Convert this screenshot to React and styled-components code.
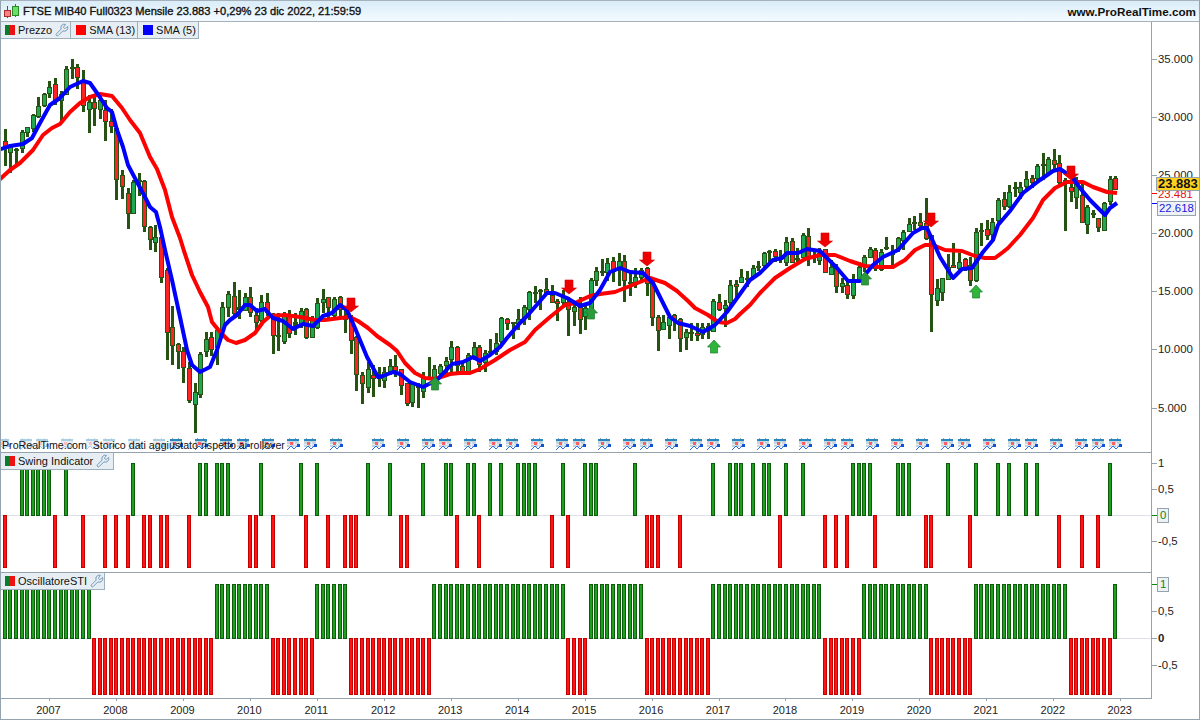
import React from 'react'
import styled, { createGlobalStyle } from 'styled-components'
import { Wrench } from 'lucide-react'

// bar x position in page pixels, one bar a month
const barX = i => 4.8 + 5.58 * i

// candles as read off the chart: [wick top, body top, body bottom, wick bottom, colour]
// y values are in 3x units from the given base line
const rows = (base, list) => list.map(r => [base + r[0] / 3, base + r[1] / 3, base + r[2] / 3, base + r[3] / 3, r[4]])

const candles = [
  ...rows(50, [
    [238, 274, 290, 350, 'r'], [285, 285, 305, 370, 'g'], [295, 298, 304, 345, 'd'], [240, 245, 293, 308, 'g'],
    [232, 232, 248, 262, 'g'], [192, 195, 235, 245, 'g'], [140, 168, 197, 203, 'g'], [128, 132, 165, 170, 'g'],
    [93, 112, 130, 145, 'g'], [85, 103, 150, 165, 'r'], [123, 133, 150, 212, 'g'], [48, 57, 132, 135, 'g'],
    [27, 50, 55, 87, 'd'], [42, 52, 82, 117, 'r'], [60, 95, 165, 185, 'r'], [135, 157, 178, 248, 'g'],
    [135, 157, 175, 228, 'r'], [135, 150, 178, 207, 'g'], [150, 180, 213, 272, 'r'], [178, 212, 228, 250, 'r'],
    [235, 235, 388, 450, 'r'], [360, 375, 408, 447, 'r'], [415, 428, 487, 538, 'r'], [390, 397, 490, 490, 'g'],
    [370, 390, 395, 440, 'd'], [390, 393, 527, 545, 'r'], [528, 532, 568, 600, 'r'], [525, 560, 575, 605, 'g'],
  ]),
  ...rows(250, [
    [-45, -39, 82, 100, 'r'], [55, 60, 245, 332, 'r'], [168, 230, 283, 345, 'r'], [280, 283, 305, 357, 'r'],
    [290, 303, 352, 398, 'r'], [335, 355, 450, 458, 'r'], [400, 425, 460, 550, 'g'], [305, 313, 432, 443, 'g'],
    [245, 268, 305, 320, 'g'], [245, 260, 295, 317, 'r'], [230, 240, 290, 345, 'g'], [155, 172, 242, 250, 'g'],
    [123, 133, 172, 200, 'g'], [97, 137, 188, 205, 'r'], [120, 170, 178, 208, 'd'], [130, 140, 180, 185, 'g'],
    [112, 140, 185, 203, 'r'], [175, 195, 217, 240, 'r'], [135, 157, 210, 215, 'g'], [130, 155, 185, 200, 'r'],
    [190, 205, 257, 314, 'r'], [190, 254, 260, 305, 'd'], [187, 195, 272, 282, 'g'], [180, 195, 248, 263, 'r'],
    [190, 215, 232, 255, 'd'], [175, 183, 225, 235, 'g'], [175, 178, 263, 267, 'r'], [197, 210, 260, 263, 'g'],
    [143, 160, 232, 235, 'g'], [117, 148, 157, 188, 'g'], [140, 142, 172, 205, 'r'], [140, 148, 195, 205, 'g'],
    [138, 142, 178, 200, 'r'], [178, 205, 211, 250, 'd'], [195, 205, 272, 312, 'r'], [258, 262, 372, 422, 'r'],
    [365, 375, 400, 460, 'r'], [335, 358, 412, 428, 'g'], [345, 375, 385, 442, 'r'], [352, 380, 386, 413, 'd'],
    [352, 365, 390, 415, 'g'], [328, 347, 362, 375, 'g'], [315, 347, 360, 380, 'r'], [358, 358, 405, 435, 'r'],
    [400, 400, 460, 470, 'r'], [395, 403, 457, 470, 'g'], [400, 407, 413, 475, 'd'], [365, 385, 425, 443, 'g'],
    [320, 380, 386, 390, 'd'], [345, 358, 385, 400, 'g'], [342, 348, 370, 375, 'g'], [322, 332, 345, 380, 'g'],
  ]),
  ...rows(240, [
    [303, 322, 357, 395, 'g'], [318, 322, 375, 395, 'r'], [370, 377, 397, 405, 'r'], [340, 345, 395, 400, 'g'],
    [305, 320, 347, 360, 'g'], [315, 322, 372, 397, 'r'], [330, 340, 367, 395, 'g'], [297, 334, 340, 345, 'd'],
    [278, 308, 332, 345, 'g'], [230, 235, 305, 310, 'g'], [235, 238, 250, 270, 'r'], [245, 246, 251, 295, 'd'],
    [208, 238, 250, 270, 'g'], [195, 202, 232, 255, 'g'], [152, 157, 208, 240, 'g'], [138, 155, 160, 190, 'd'],
    [148, 150, 155, 210, 'd'], [115, 148, 160, 165, 'r'], [135, 165, 185, 190, 'r'], [178, 183, 190, 245, 'r'],
    [150, 170, 185, 195, 'g'], [172, 185, 205, 290, 'r'], [195, 200, 212, 257, 'g'], [170, 200, 235, 280, 'r'],
    [190, 205, 230, 272, 'g'], [115, 120, 205, 210, 'g'], [82, 92, 118, 138, 'g'], [58, 92, 97, 108, 'd'],
    [55, 68, 95, 125, 'g'], [50, 63, 92, 125, 'r'], [40, 62, 85, 140, 'g'], [45, 62, 118, 185, 'r'],
    [95, 125, 130, 167, 'd'], [85, 112, 130, 145, 'g'], [85, 90, 110, 130, 'g'], [82, 85, 130, 168, 'r'],
    [115, 115, 232, 260, 'r'], [225, 230, 268, 333, 'r'], [225, 247, 268, 270, 'g'], [222, 232, 255, 297, 'g'],
    [222, 225, 240, 272, 'r'], [235, 237, 295, 338, 'r'], [268, 275, 290, 330, 'g'], [250, 275, 281, 305, 'd'],
    [250, 278, 284, 303, 'r'], [250, 260, 282, 297, 'g'], [250, 258, 270, 297, 'r'], [178, 183, 272, 275, 'g'],
    [163, 185, 205, 213, 'r'], [180, 195, 205, 260, 'g'], [120, 135, 185, 205, 'g'], [120, 131, 137, 170, 'r'],
  ]),
  ...rows(190, [
    [238, 262, 278, 280, 'g'], [243, 264, 268, 292, 'r'], [225, 235, 260, 262, 'g'], [212, 228, 233, 243, 'd'],
    [185, 190, 225, 232, 'g'], [180, 183, 188, 218, 'd'], [178, 182, 197, 217, 'r'], [180, 204, 210, 218, 'd'],
    [140, 157, 218, 228, 'g'], [145, 152, 215, 218, 'r'], [175, 203, 208, 218, 'd'], [130, 135, 200, 205, 'g'],
    [115, 137, 198, 228, 'r'], [180, 195, 200, 220, 'd'], [175, 190, 210, 225, 'g'], [178, 178, 248, 250, 'r'],
    [210, 230, 250, 252, 'g'], [222, 235, 290, 310, 'r'], [265, 280, 290, 310, 'g'], [270, 285, 313, 326, 'r'],
    [252, 275, 315, 326, 'g'], [215, 230, 270, 272, 'g'], [195, 200, 220, 245, 'g'], [172, 177, 200, 203, 'g'],
    [175, 180, 235, 245, 'r'], [178, 185, 235, 245, 'g'], [142, 172, 178, 182, 'd'], [165, 190, 196, 225, 'd'],
    [140, 145, 178, 185, 'g'], [120, 125, 148, 180, 'g'], [85, 103, 125, 127, 'g'], [78, 96, 101, 120, 'd'],
    [70, 95, 103, 115, 'r'], [25, 100, 145, 150, 'r'], [135, 135, 312, 425, 'r'], [267, 293, 330, 347, 'g'],
    [263, 265, 307, 332, 'g'], [193, 230, 265, 268, 'g'], [160, 225, 232, 232, 'r'], [190, 215, 233, 240, 'g'],
    [205, 208, 235, 245, 'r'], [200, 225, 270, 287, 'r'], [115, 127, 272, 278, 'g'], [100, 120, 126, 170, 'd'],
    [90, 118, 137, 150, 'r'], [85, 95, 130, 155, 'g'], [25, 30, 90, 100, 'g'], [5, 28, 48, 60, 'r'],
    [-15, 5, 48, 55, 'g'],
  ]),
  ...rows(140, [
    [125, 140, 146, 170, 'd'], [125, 140, 155, 175, 'g'], [92, 118, 140, 150, 'g'], [105, 115, 128, 145, 'r'],
    [72, 78, 115, 122, 'g'], [40, 72, 78, 120, 'd'], [52, 57, 100, 105, 'g'], [28, 60, 72, 90, 'r'],
    [45, 68, 125, 135, 'r'], [115, 120, 126, 275, 'd'], [130, 140, 152, 188, 'r'], [110, 120, 170, 205, 'g'],
    [130, 165, 245, 245, 'r'], [195, 200, 250, 283, 'g'], [210, 218, 224, 235, 'd'], [235, 235, 262, 278, 'r'],
    [185, 190, 272, 272, 'g'], [108, 118, 185, 195, 'g'], [108, 113, 145, 150, 'r'],
  ]),
]

const redLine = '-2,181 10,170 20,163 33,150 43,135 52,128 60,124 70,112 80,103 90,97 100,94 112,96 122,108 130,120 140,133 150,157 157,169 165,190 172,217 180,238 184,251 192,275 200,292 208,307 212,322 220,332 228,340 236,343 245,340 255,333 263,322 270,316 285,315 300,317 315,320 325,320 340,318 350,317 358,321 368,328 377,336 390,345 397,351 405,363 415,373 425,378 435,379 450,374 460,373 470,373 480,369 495,360 510,350 525,342 535,330 550,317 565,305 575,303 590,296 600,294 615,292 630,286 640,282 650,278 665,283 677,291 688,301 695,308 708,315 718,322 727,323 735,319 740,314 750,305 760,293 775,278 790,268 805,259 820,255 835,255 850,261 865,266 880,267 893,267 905,260 915,250 925,245 933,245 945,250 962,251 975,256 985,258 995,258 1003,252 1008,248 1020,235 1033,218 1043,200 1055,188 1067,182 1083,182 1093,187 1107,192 1117,193'
const blueLine = '-2,150 10,146 23,144 32,138 40,123 50,105 60,98 70,87 83,81 90,83 97,93 107,108 112,112 117,130 123,147 128,165 137,182 145,197 150,207 156,212 160,227 165,250 172,280 180,317 187,350 192,365 200,372 210,367 217,350 225,325 230,320 237,315 245,305 250,305 257,311 265,309 273,318 283,321 293,329 303,324 313,326 323,316 332,313 340,305 347,310 355,328 367,357 378,377 383,376 393,372 400,374 410,382 423,387 437,380 452,364 463,362 473,357 480,361 490,355 500,347 507,338 520,323 528,315 547,293 555,293 567,298 580,306 590,303 600,290 610,272 620,268 630,272 643,273 653,283 670,317 678,323 690,326 703,332 715,325 727,312 740,294 750,280 760,273 773,260 782,258 787,253 798,253 807,249 820,251 837,268 848,281 860,281 873,265 883,257 898,250 913,233 922,228 927,228 940,257 953,278 962,269 972,268 983,252 993,240 998,225 1010,211 1023,193 1040,180 1053,171 1060,169 1072,177 1080,188 1090,200 1105,215 1110,208 1117,203'

const downArrows = [[351, 298], [569, 280], [647, 252], [825, 233], [931, 213], [1071, 166]]
const upArrows = [[435, 377, true], [591, 306, true], [714, 340, false], [865, 272, true], [976, 285, false]]

const paleCalendars = [4, 27, 43, 68, 93, 110, 135, 160]
const calendars = [177, 202, 227, 244, 269, 294, 311, 337, 379, 404, 429, 446, 471, 496, 513, 538, 563, 580, 605, 630, 647, 672, 697, 714, 739, 764, 781, 806, 831, 848, 873, 898, 923, 948, 965, 990, 1015, 1032, 1057, 1082, 1099, 1116]

const swingUp = [3, 4, 5, 6, 7, 8, 11, 23, 35, 36, 38, 39, 40, 46, 53, 56, 65, 69, 75, 79, 80, 83, 84, 87, 89, 92, 93, 94, 95, 100, 104, 105, 106, 113, 127, 130, 131, 132, 134, 136, 137, 140, 143, 152, 153, 154, 155, 160, 161, 162, 169, 174, 178, 180, 183, 185, 198]
const swingDown = [0, 9, 14, 18, 20, 22, 25, 26, 28, 29, 33, 44, 45, 48, 54, 58, 61, 62, 63, 71, 72, 81, 85, 98, 101, 115, 116, 117, 121, 139, 147, 149, 151, 156, 165, 166, 173, 189, 193, 196]

// runs of the oscillator: [first month, last month, up]
const oscRuns = [[0, 15, 1], [16, 37, 0], [38, 47, 1], [48, 55, 0], [56, 61, 1], [62, 76, 0], [77, 100, 1], [101, 104, 0], [105, 114, 1], [115, 126, 0], [127, 146, 1], [147, 153, 0], [154, 165, 1], [166, 173, 0], [174, 190, 1], [191, 198, 0], [199, 199, 1]]
const oscBars = oscRuns.flatMap(([a, b, up]) => Array.from({ length: b - a + 1 }, (_, k) => [a + k, up]))

const years = Array.from({ length: 17 }, (_, k) => 2007 + k)
const priceLevels = ['35.000', '30.000', '25.000', '20.000', '15.000', '10.000', '5.000']

const GlobalStyle = createGlobalStyle`
  html, body { margin: 0; padding: 0; background: #fff; }
  body { font-family: "Liberation Sans", Arial, sans-serif; font-size: 11px; color: #111; }
`

const Screen = styled.div`
  width: 1200px;
  height: 720px;
  box-sizing: border-box;
  border: 1px solid #94a3ae;
  border-top-color: #a5b2bb;
  display: flex;
  flex-direction: column;
  overflow: hidden;
  background: #fff;
`

const Header = styled.header`
  height: 20px;
  flex: none;
  display: flex;
  align-items: center;
  justify-content: space-between;
  padding: 0 3px 0 2px;
  border-bottom: 1px solid #a5b2bb;
  background: linear-gradient(#d9ecf8, #f4fbff);
`

const Title = styled.div`
  display: flex;
  align-items: center;
  gap: 4px;
  font-size: 11.1px;
  -webkit-text-stroke: 0.35px #111;
  white-space: nowrap;
`

const Site = styled.div`
  font-size: 11.7px;
  font-weight: bold;
`

const Panel = styled.section`
  flex: none;
  height: ${p => p.$h}px;
  display: flex;
`

const Plot = styled.div`
  position: relative;
  width: 1151px;
  flex: none;
  box-sizing: border-box;
  border-bottom: 1px solid #94a3ae;
  border-right: 1px solid #94a3ae;
  svg.chart { display: block; }
`

const YAxis = styled.div`
  position: relative;
  flex: 1;
  display: flex;
  flex-direction: column;
  padding-top: ${p => p.$start}px;
`

const AxisRow = styled.div`
  flex: none;
  height: ${p => p.$step}px;
  display: flex;
  align-items: flex-start;
`

const Tick = styled.i`
  flex: none;
  width: 5px;
  height: 1px;
  margin-top: ${p => p.$m || 0}px;
  background: ${p => p.$color || '#94a3ae'};
`

const Value = styled.span`
  margin: -7px 0 0 1px;
  height: 14px;
  line-height: 14px;
  font-size: 11.4px;
  font-weight: ${p => (p.$bold ? 'bold' : 'normal')};
  color: ${p => p.$color || '#222'};
`

const BoxedValue = styled.span`
  margin-top: -7px;
  height: 13px;
  line-height: 13px;
  padding: 0 ${p => p.$pad ?? 1}px;
  border: 1px solid #94a3ae;
  background: #eef2f7;
  color: ${p => p.$color};
  font-size: 11.4px;
`

// last prices sit over the scale, gold one on top
const Quotes = styled.div`
  position: absolute;
  left: 0;
  top: 155px;
  display: flex;
  flex-direction: column;
`

const GoldQuote = styled.div`
  position: relative;
  z-index: 1;
  margin-left: 4px;
  height: 12px;
  line-height: 12px;
  padding: 0 1px;
  border: 1px solid #94a3ae;
  background: #ffd21f;
  font-size: 13px;
  font-weight: bold;
  color: #111;
`

const QuoteRow = styled.div`
  display: flex;
  align-items: flex-start;
  height: ${p => p.$h}px;
  margin-top: ${p => p.$m || 0}px;
`

const RedQuote = styled.span`
  margin-left: 1px;
  line-height: 14px;
  font-size: 11.4px;
  color: #e01010;
`

const BlueQuote = styled.span`
  height: 13px;
  line-height: 13px;
  padding: 0 1px;
  border: 1px solid #94a3ae;
  background: #eef2f7;
  font-size: 11.4px;
  color: #1a1ae0;
`

const LegendRow = styled.div`
  position: absolute;
  left: -1px;
  top: 0;
  display: flex;
  height: 17px;
`

const LegendTab = styled.div`
  display: flex;
  align-items: center;
  box-sizing: border-box;
  height: 17px;
  padding: 0 ${p => p.$right ?? 2}px 0 5px;
  gap: 3px;
  background: #e7eef3;
  border: 1px solid #9fb0bd;
  border-left-width: 0;
  border-top-width: 0;
  white-space: nowrap;
`

const Swatch = styled.span`
  width: 10px;
  height: 10px;
  flex: none;
  background: ${p => p.$color || 'linear-gradient(90deg, #0a7d2c 50%, #ee1111 50%)'};
`

const Note = styled.div`
  position: absolute;
  left: 1px;
  bottom: 0;
  height: 14px;
  line-height: 14px;
  font-size: 10.65px;
  color: #111;
  white-space: pre;
`

const DateAxis = styled.div`
  flex: 1;
  display: flex;
  padding-left: 15px;
`

const YearCell = styled.div`
  flex: none;
  width: 66.96px;
  display: flex;
  flex-direction: column;
  align-items: center;
`

const YearTick = styled.i`
  width: 1px;
  height: 2px;
  background: #94a3ae;
`

const Year = styled.span`
  margin: 2px 2px 0 0;
  line-height: 14px;
  font-size: 11px;
  color: #222;
`

const ToolIcon = () => <Wrench size={14} strokeWidth={1.3} color="#4f7da5" />

const CandleMark = () => (
  <svg width="16" height="15" viewBox="0 0 16 15" shapeRendering="crispEdges">
    <rect x="3.5" y="2" width="1" height="12" fill="#8a3a3a" />
    <rect x="1.5" y="6.5" width="6" height="6" fill="#ff8080" stroke="#a03030" />
    <rect x="11.5" y="0" width="1" height="13" fill="#2a7a2a" />
    <rect x="9.5" y="2.5" width="6" height="9" fill="#66e066" stroke="#2a8a2a" />
  </svg>
)

const Candles = () => candles.map((c, i) => {
  const x = Math.round(barX(i))
  const [wt, bt, bb, wb, kind] = c
  const fill = kind === 'g' ? '#1fa84f' : '#fb2424'
  return (
    <g key={i} shapeRendering="crispEdges">
      <rect x={x - 1} y={Math.round(wt)} width="3" height={Math.round(wb - wt)} fill="#265213" />
      {kind === 'd'
        ? <rect x={x - 2} y={Math.round(bt)} width="5" height={Math.max(1, Math.round(bb - bt))} fill="#265213" />
        : <rect x={x - 2 + 0.5} y={Math.round(bt) + 0.5} width="4" height={Math.max(1, Math.round(bb - bt))} fill={fill} stroke="#265213" />}
    </g>
  )
})

const DownArrow = ({ x, y }) => (
  <polygon
    points={`${x - 4},${y} ${x + 4},${y} ${x + 4},${y + 8} ${x + 7.5},${y + 8} ${x},${y + 14} ${x - 7.5},${y + 8} ${x - 4},${y + 8}`}
    fill="#ee0000"
    stroke="#d40000"
    strokeWidth="0.6"
  />
)

const UpArrow = ({ x, y, dark }) => (
  <polygon
    points={`${x - 3.5},${y + 13} ${x + 3.5},${y + 13} ${x + 3.5},${y + 7} ${x + 6.5},${y + 7} ${x},${y} ${x - 6.5},${y + 7} ${x - 3.5},${y + 7}`}
    fill={dark ? '#2b9a3a' : '#2fb53a'}
    stroke="#1d7d2c"
    strokeWidth="0.7"
  />
)

const Calendar = ({ x, pale }) => (
  <g transform={`translate(${x - 7} 438)`} opacity={pale ? 0.4 : 1} shapeRendering="crispEdges">
    <rect x="2" y="0" width="1" height="2" fill="#9aa6ad" />
    <rect x="8" y="0" width="1" height="2" fill="#9aa6ad" />
    <rect x="0" y="1" width="12" height="2" fill="#2a86be" />
    <rect x="0" y="3" width="12" height="6" fill="#c3d6de" />
    <rect x="3" y="4" width="1" height="5" fill="#e8f0f3" />
    <rect x="7" y="4" width="1" height="5" fill="#e8f0f3" />
    <rect x="0" y="6" width="12" height="1" fill="#e8f0f3" />
    <rect x="3" y="4" width="3" height="3" fill="#ff5c66" />
    <polyline points="0,12 4,8 7,11 11,7" fill="none" stroke="#2b70e4" strokeWidth="1" shapeRendering="auto" />
    <rect x="10" y="6" width="3" height="3" fill="#1650d4" />
  </g>
)

const Bar = ({ i, top, bottom, up }) => (
  <rect
    x={Math.round(barX(i)) - 2 + 0.5}
    y={top + 0.5}
    width="3"
    height={bottom - top - 1}
    fill={up ? '#1ea01e' : '#ff1414'}
    stroke={up ? '#0c5c0c' : '#c40000'}
    shapeRendering="crispEdges"
  />
)

const MainPanel = () => (
  <Panel $h={431}>
    <Plot>
      <svg className="chart" width="1150" height="430" viewBox="1 22 1150 430">
        <Candles />
        <polyline points={redLine} fill="none" stroke="#ff0000" strokeWidth="4" strokeLinejoin="round" />
        <polyline points={blueLine} fill="none" stroke="#0000ff" strokeWidth="4" strokeLinejoin="round" />
        {downArrows.map(([x, y]) => <DownArrow key={x} x={x} y={y} />)}
        {upArrows.map(([x, y, dark]) => <UpArrow key={x} x={x} y={y} dark={dark} />)}
        {paleCalendars.map(x => <Calendar key={x} x={x} pale />)}
        {calendars.map(x => <Calendar key={x} x={x} />)}
      </svg>
      <LegendRow>
        <LegendTab $right={1}><Swatch /> Prezzo <ToolIcon /></LegendTab>
        <LegendTab $right={2}><Swatch $color="#ff0000" /> SMA (13)</LegendTab>
        <LegendTab $right={2}><Swatch $color="#0000ff" /> SMA (5)</LegendTab>
      </LegendRow>
      <Note>{'ProRealTime.com  Storico dati aggiustato rispetto ai rollover'}</Note>
    </Plot>
    <YAxis $start={37}>
      {priceLevels.map(v => (
        <AxisRow key={v} $step={58.1}>
          <Tick />
          <Value>{v}</Value>
        </AxisRow>
      ))}
      <Quotes>
        <GoldQuote>23.883</GoldQuote>
        <QuoteRow $h={14} $m={-4}>
          <Tick $color="#ff0000" $m={6} />
          <RedQuote>23.481</RedQuote>
        </QuoteRow>
        <QuoteRow $h={15}>
          <Tick $color="#0000ff" $m={2} />
          <BlueQuote>22.618</BlueQuote>
        </QuoteRow>
      </Quotes>
    </YAxis>
  </Panel>
)

const SwingPanel = () => (
  <Panel $h={120}>
    <Plot>
      <svg className="chart" width="1150" height="119" viewBox="1 453 1150 119">
        <line x1="1" x2="1151" y1="515.5" y2="515.5" stroke="#dfe1e8" />
        {swingUp.map(i => <Bar key={i} i={i} top={463} bottom={516} up />)}
        {swingDown.map(i => <Bar key={i} i={i} top={515} bottom={568} />)}
      </svg>
      <LegendRow>
        <LegendTab $right={3}><Swatch /> Swing Indicator <ToolIcon /></LegendTab>
      </LegendRow>
    </Plot>
    <YAxis $start={10}>
      <AxisRow $step={26}><Tick /><Value>1</Value></AxisRow>
      <AxisRow $step={26}><Tick /><Value>0,5</Value></AxisRow>
      <AxisRow $step={26}><Tick $color="#0a8a0a" /><BoxedValue $color="#0a8a0a" $pad={2}>0</BoxedValue></AxisRow>
      <AxisRow $step={26}><Tick /><Value>-0,5</Value></AxisRow>
    </YAxis>
  </Panel>
)

const OscPanel = () => (
  <Panel $h={126}>
    <Plot>
      <svg className="chart" width="1150" height="125" viewBox="1 573 1150 125">
        <line x1="1" x2="1151" y1="638.5" y2="638.5" stroke="#dfe1e8" />
        {oscBars.map(([i, up]) => up
          ? <Bar key={i} i={i} top={584} bottom={639} up />
          : <Bar key={i} i={i} top={638} bottom={695} />)}
      </svg>
      <LegendRow>
        <LegendTab $right={0}><Swatch /> OscillatoreSTI <ToolIcon /></LegendTab>
      </LegendRow>
    </Plot>
    <YAxis $start={11}>
      <AxisRow $step={27}><Tick $color="#0a8a0a" /><BoxedValue $color="#0a8a0a" $pad={2}>1</BoxedValue></AxisRow>
      <AxisRow $step={27}><Tick /><Value>0,5</Value></AxisRow>
      <AxisRow $step={27}><Tick /><Value $bold>0</Value></AxisRow>
      <AxisRow $step={27}><Tick /><Value>-0,5</Value></AxisRow>
    </YAxis>
  </Panel>
)

export default function App() {
  return (
    <Screen>
      <GlobalStyle />
      <Header>
        <Title><CandleMark /> FTSE MIB40 Full0323 Mensile 23.883 +0,29% 23 dic 2022, 21:59:59</Title>
        <Site>www.ProRealTime.com</Site>
      </Header>
      <MainPanel />
      <SwingPanel />
      <OscPanel />
      <DateAxis>
        {years.map(y => (
          <YearCell key={y}>
            <YearTick />
            <Year>{y}</Year>
          </YearCell>
        ))}
      </DateAxis>
    </Screen>
  )
}
